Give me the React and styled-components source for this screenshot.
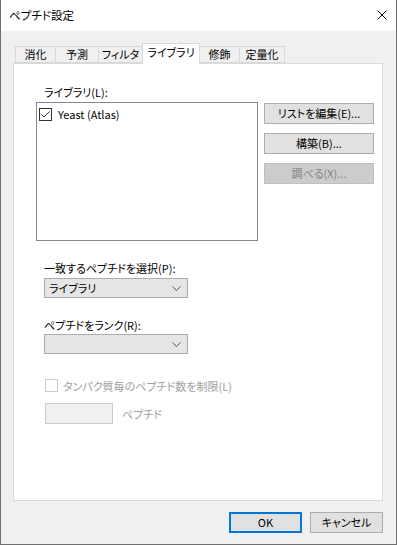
import React from "react";
import styled, { createGlobalStyle } from "styled-components";

const Global = createGlobalStyle`
  html, body { margin: 0; padding: 0; background: #ffffff; }
  body {
    font-family: "Noto Sans CJK JP", "Noto Sans", sans-serif;
    font-size: 11px;
    font-feature-settings: "palt" 1;
    color: #000;
  }
  * { box-sizing: border-box; }
`;

const Window = styled.div`
  width: 397px;
  height: 545px;
  display: flex;
  flex-direction: column;
  border: 1px solid #707070;
  border-top: none;
  background: #f0f0f0;
`;

const TitleBar = styled.div`
  height: 31px;
  background: #ffffff;
  display: flex;
  align-items: center;
  justify-content: space-between;
  padding: 0 9px 1px 8px;
  font-size: 11.5px;
`;

const CloseIcon = styled.svg`
  width: 10px;
  height: 10px;
`;

const Body = styled.div`
  flex: 1;
  display: flex;
  flex-direction: column;
  padding: 12px 13px 0 12px;
`;

const TabStrip = styled.div`
  height: 20px;
  display: flex;
  align-items: flex-end;
  padding-left: 2px;
  position: relative;
  z-index: 1;
`;

const Tab = styled.div`
  width: ${(p) => p.$w}px;
  height: ${(p) => (p.$active ? 21 : 17)}px;
  margin-left: -1px;
  margin-bottom: ${(p) => (p.$active ? -1 : 0)}px;
  border: 1px solid #d9d9d9;
  border-bottom: ${(p) => (p.$active ? "none" : "1px solid #d9d9d9")};
  background: ${(p) => (p.$active ? "#ffffff" : "#f0f0f0")};
  display: flex;
  align-items: center;
  justify-content: center;
  padding-bottom: ${(p) => (p.$active ? 4 : 0)}px;
  line-height: 15px;
  white-space: nowrap;
  position: relative;
  z-index: ${(p) => (p.$active ? 2 : 1)};
  &:first-child { margin-left: 0; }
`;

const Panel = styled.div`
  height: 438px;
  border: 1px solid #d9d9d9;
  background: #ffffff;
  display: flex;
  flex-direction: column;
  padding-top: 21px;
`;

const Label = styled.div`
  line-height: 15px;
  height: 15px;
  margin-left: 30px;
  margin-top: ${(p) => p.$mt || 0}px;
  color: ${(p) => (p.$disabled ? "#a0a0a0" : "#000")};
  white-space: nowrap;
`;

const LibraryRow = styled.div`
  display: flex;
  align-items: flex-start;
  margin-top: 2px;
  margin-left: 22px;
`;

const ListBox = styled.div`
  width: 222px;
  height: 139px;
  border: 1px solid #828790;
  background: #fff;
  padding: 4px 0 0 2px;
`;

const ListItem = styled.div`
  display: flex;
  align-items: center;
  gap: 6px;
  height: 15px;
  line-height: 15px;
  color: #000;
`;

const CheckBox = styled.span`
  width: 13px;
  height: 13px;
  border: 1px solid ${(p) => (p.$disabled ? "#cccccc" : "#333333")};
  background: #fff;
  display: inline-flex;
  align-items: center;
  justify-content: center;
  flex: none;
`;

const ButtonColumn = styled.div`
  display: flex;
  flex-direction: column;
  gap: 9px;
  margin-left: 6px;
  margin-top: 1px;
`;

const Button = styled.div`
  width: ${(p) => p.$w}px;
  height: 21px;
  background: ${(p) => (p.$disabled ? "#cccccc" : "#e1e1e1")};
  border: ${(p) =>
    p.$default ? "2px solid #0078d7" : p.$disabled ? "1px solid #bfbfbf" : "1px solid #adadad"};
  color: ${(p) => (p.$disabled ? "#838383" : "#000")};
  display: flex;
  align-items: center;
  justify-content: center;
  line-height: 15px;
  white-space: nowrap;
`;

const Combo = styled.div`
  width: 144px;
  height: 20px;
  margin-left: 30px;
  margin-top: ${(p) => p.$mt || 0}px;
  background: #e5e5e5;
  border: 1px solid #adadad;
  display: flex;
  align-items: center;
  justify-content: space-between;
  padding: 0 6px 0 4px;
  line-height: 15px;
`;

const CheckRow = styled.div`
  display: flex;
  align-items: center;
  gap: 5px;
  height: 15px;
  margin-left: 31px;
  margin-top: 24px;
  color: #a0a0a0;
  white-space: nowrap;
`;

const FieldRow = styled.div`
  display: flex;
  align-items: center;
  gap: 9px;
  margin-left: 31px;
  margin-top: 10px;
  color: #a0a0a0;
`;

const TextField = styled.div`
  width: 68px;
  height: 21px;
  background: #f0f0f0;
  border: 1px solid #cccccc;
`;

const Footer = styled.div`
  display: flex;
  justify-content: flex-end;
  gap: 8px;
  padding-top: 11px;
`;

const Chevron = () => (
  <svg width="9" height="5" viewBox="0 0 9 5">
    <polyline points="0.5,0.5 4.5,4.5 8.5,0.5" fill="none" stroke="#555" strokeWidth="1" />
  </svg>
);

const tabs = [
  { t: "消化", w: 41 },
  { t: "予測", w: 44 },
  { t: "フィルタ", w: 45 },
  { t: "ライブラリ", w: 58, active: true },
  { t: "修飾", w: 41 },
  { t: "定量化", w: 46 },
];

export default function App() {
  return (
    <>
      <Global />
      <Window>
        <TitleBar>
          <span>ペプチド設定</span>
          <CloseIcon viewBox="0 0 10 10">
            <path d="M0.5 0.5 L9.5 9.5 M9.5 0.5 L0.5 9.5" stroke="#000" strokeWidth="1" />
          </CloseIcon>
        </TitleBar>
        <Body>
          <TabStrip>
            {tabs.map((tb) => (
              <Tab key={tb.t} $w={tb.w} $active={tb.active}>
                {tb.t}
              </Tab>
            ))}
          </TabStrip>
          <Panel>
            <Label>ライブラリ(L):</Label>
            <LibraryRow>
              <ListBox>
                <ListItem>
                  <CheckBox>
                    <svg width="11" height="11" viewBox="0 0 11 11">
                      <polyline points="1.5,5.5 4,8 9.5,2.5" fill="none" stroke="#333" strokeWidth="1" />
                    </svg>
                  </CheckBox>
                  <span>Yeast (Atlas)</span>
                </ListItem>
              </ListBox>
              <ButtonColumn>
                <Button $w={110}>リストを編集(E)...</Button>
                <Button $w={110}>構築(B)...</Button>
                <Button $w={110} $disabled>調べる(X)...</Button>
              </ButtonColumn>
            </LibraryRow>
            <Label $mt={20}>一致するペプチドを選択(P):</Label>
            <Combo $mt={2}>
              <span>ライブラリ</span>
              <Chevron />
            </Combo>
            <Label $mt={20}>ペプチドをランク(R):</Label>
            <Combo $mt={1}>
              <span />
              <Chevron />
            </Combo>
            <CheckRow>
              <CheckBox $disabled />
              <span>タンパク質毎のペプチド数を制限(L)</span>
            </CheckRow>
            <FieldRow>
              <TextField />
              <span>ペプチド</span>
            </FieldRow>
          </Panel>
          <Footer>
            <Button $w={73} $default>OK</Button>
            <Button $w={73}>キャンセル</Button>
          </Footer>
        </Body>
      </Window>
    </>
  );
}
